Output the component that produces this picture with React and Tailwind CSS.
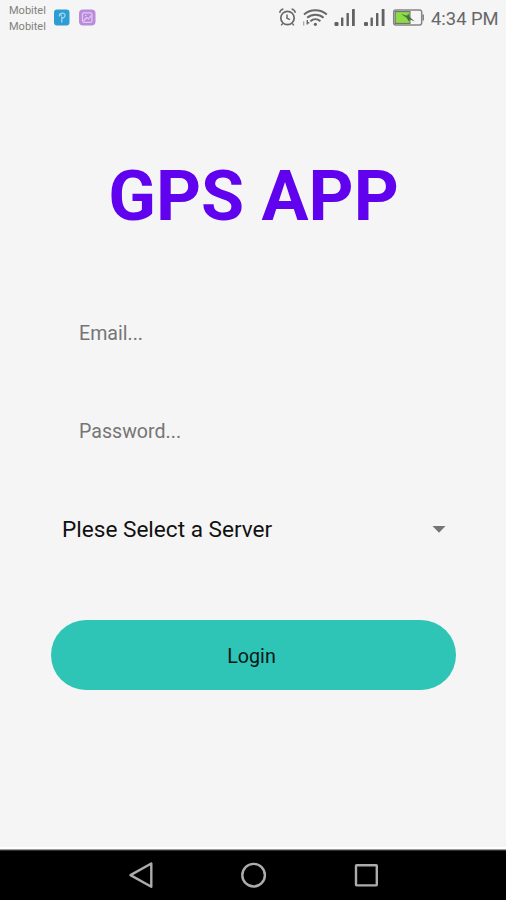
function StatusBar() {
  return (
    <header className="flex h-9 shrink-0 items-center text-[#686868]">
      <div className="ml-[9px] w-[45px] pt-px text-[11px] leading-4 text-[#808080]">
        <div>Mobitel</div>
        <div>Mobitel</div>
      </div>
      <svg className="h-9 w-[224px] shrink-0" viewBox="54 0 224 36" fill="none">
        <rect x="54" y="9.5" width="15.5" height="16" rx="3" fill="#2f9dd2" />
        <path d="M61.8 22.5V17M59.5 16.5c-1.3-3.2 4.2-4.6 5.4-2 .8 2-1 3.2-3 4M60 13.5l1.8 3" stroke="#a5daf0" strokeWidth="1.2" />
        <rect x="79" y="9.5" width="16.5" height="16" rx="4" fill="#b98bdb" />
        <rect x="82.5" y="12.8" width="9.5" height="9.5" rx="1.5" stroke="#e2c9f2" strokeWidth="1.2" />
        <path d="M83.5 21l3-3.5 2 1.5 3-3.5M85 15.5h1.5" stroke="#e2c9f2" strokeWidth="1.2" />
      </svg>
      <svg className="h-9 w-[152px] shrink-0" viewBox="278 0 152 36" fill="none" stroke="#686868">
        <circle cx="287.5" cy="18" r="6.7" strokeWidth="1.7" />
        <path d="M287 14.5v3.8l3 1.3M279.6 12.8c.5-2 1.8-3.2 3.8-3.7M291.6 9.1c2 .5 3.3 1.7 3.8 3.7M282.8 23.4l-1.6 2M292.2 23.4l1.6 2" strokeWidth="1.5" />
        <path d="M304 14.4c6.5-5.6 16.2-5.6 22.8 0M307.2 17.8c4.8-4 11.6-4 16.4 0M310.4 21.2c2.9-2.5 7.1-2.5 10 0" strokeWidth="2" />
        <circle cx="315.4" cy="24.3" r="1.6" fill="#686868" stroke="none" />
        <path d="M303.7 25.5v-4" stroke="#999" strokeWidth="1.1" />
        <path d="M307.3 20v4.5M306.5 22.8h2.8" strokeWidth="1.4" />
        <g fill="#626262" stroke="none">
          <rect x="334.5" y="22" width="4" height="4" rx="1" />
          <rect x="341" y="17.5" width="2.4" height="8.5" rx=".5" />
          <rect x="346.5" y="13" width="2.4" height="13" rx=".5" />
          <rect x="352" y="9" width="2.8" height="17" rx=".5" />
          <rect x="364" y="22" width="4" height="4" rx="1" />
          <rect x="370.5" y="17.5" width="2.4" height="8.5" rx=".5" />
          <rect x="376" y="13" width="2.4" height="13" rx=".5" />
          <rect x="381.7" y="9" width="2.8" height="17" rx=".5" />
        </g>
        <rect x="393.7" y="10" width="28" height="15" rx="2.2" stroke="#858585" strokeWidth="1.5" />
        <rect x="395.2" y="11.6" width="14.8" height="11.8" fill="#8bdc48" />
        <path d="M423.2 14.5v6" stroke="#858585" strokeWidth="1.6" />
        <path d="M401 14l6 1.8 1.4-2.1 1.4 3.5 5.2 4.2-5.2-1.9-1 2-2.2-3.8z" fill="#49703a" stroke="none" />
      </svg>
      <div className="ml-[1px] pt-px text-[18.4px] leading-9 whitespace-nowrap">4:34 PM</div>
    </header>
  );
}

function NavigationBar() {
  return (
    <nav className="flex h-[53px] shrink-0 items-center justify-center border-t-2 border-white bg-black">
      <svg className="h-[51px] w-[506px]" viewBox="0 849 506 51" fill="none" stroke="#acacac" strokeWidth="2.4">
        <path d="M0 849.5h506" stroke="#999" strokeWidth="1" />
        <path d="M0 850.5h506" stroke="#333" strokeWidth="1" />
        <path d="M151.3 863.5v23.2l-20.8-11.6z" strokeLinejoin="round" />
        <circle cx="253.6" cy="875.2" r="11.3" />
        <rect x="356" y="865.2" width="20.8" height="20.2" rx=".6" />
      </svg>
    </nav>
  );
}

export default function App() {
  return (
    <div className="flex h-[900px] w-[506px] flex-col overflow-hidden bg-[#f5f5f5] font-['Roboto',sans-serif]">
      <StatusBar />
      <main className="flex flex-1 flex-col">
        <h1 className="mt-[120px] pl-px text-center text-[70px] leading-[80px] font-bold text-[#6002ee]">GPS APP</h1>
        <form className="flex flex-col">
          <input
            type="email"
            aria-label="Email"
            placeholder="Email..."
            className="mt-[72px] ml-[79px] h-[50px] w-[350px] bg-transparent text-[19.6px] outline-none placeholder:text-[#757575]"
          />
          <input
            type="password"
            aria-label="Password"
            placeholder="Password..."
            className="mt-12 ml-[79px] h-[50px] w-[350px] bg-transparent text-[19.6px] outline-none placeholder:text-[#757575]"
          />
          <button type="button" className="mt-12 ml-[62px] flex h-[50px] w-[384px] items-center justify-between text-[22.6px] text-[#111]">
            <span className="pt-[2px]">Plese Select a Server</span>
            <svg className="h-[7px] w-[14px]" viewBox="0 0 14 7">
              <path d="M.5 0h13L7 6.8z" fill="#757575" />
            </svg>
          </button>
          <button type="button" className="mt-[66px] ml-[51px] flex h-[70px] w-[405px] items-center justify-center rounded-full bg-[#2ec4b6] pt-[3px] pr-1 text-[19.7px] text-[#0b1817]">
            Login
          </button>
        </form>
      </main>
      <NavigationBar />
    </div>
  );
}
